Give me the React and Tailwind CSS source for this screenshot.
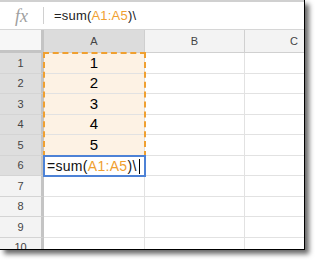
import React from 'react';

const rows = [
    { n: 1, h: 'h-[21px]', v: '1' },
    { n: 2, h: 'h-[20px]', v: '2' },
    { n: 3, h: 'h-[21px]', v: '3' },
    { n: 4, h: 'h-[20px]', v: '4' },
    { n: 5, h: 'h-[21px]', v: '5' },
    { n: 6, h: 'h-[20px]', v: '' },
    { n: 7, h: 'h-[21px]', v: '' },
    { n: 8, h: 'h-[20px]', v: '' },
    { n: 9, h: 'h-[21px]', v: '' },
    { n: 10, h: 'h-[20px]', v: '' },
];

const Formula = () => (
    <>
        =sum(<span className="text-[#f0a030]">A1:A5</span>)\
    </>
);

export default function App() {
    return (
        <div className="w-[315px] h-[260px] bg-white overflow-hidden font-['Liberation_Sans',Arial,sans-serif]">
            <div className="relative w-[305px] h-[250px] bg-white border-r border-b border-black shadow-[4px_4px_5px_rgba(0,0,0,0.6)] overflow-hidden flex flex-col">
                <div className="h-[2px] bg-[#d0d0d0] shrink-0" />

                {/* formula bar */}
                <div className="h-[28px] shrink-0 flex items-center border-b border-[#d6d6d6]">
                    <div className="w-[43px] flex justify-center">
                        <span className="font-['Liberation_Serif',serif] italic text-[18px] text-[#a0a0a0] leading-none">fx</span>
                    </div>
                    <div className="w-px h-[17px] bg-[#d0d0d0]" />
                    <div className="pl-[10px] text-[13px] text-[#222] leading-none tracking-[0.2px]">
                        <Formula />
                    </div>
                </div>

                {/* column headers */}
                <div className="h-[23px] shrink-0 flex">
                    <div className="w-[44px] bg-[#f7f7f7] border-r-[3px] border-b-[3px] border-[#c4c4c4]" />
                    <div className="w-[101px] bg-[#dcdcdc] border-r border-b border-[#cfcfcf] flex items-center justify-center text-[11px] text-[#444]">A</div>
                    <div className="w-[100px] bg-[#f3f3f3] border-r border-b border-[#d0d0d0] flex items-center justify-center text-[11px] text-[#444]">B</div>
                    <div className="flex-1 bg-[#f3f3f3] border-b border-[#d0d0d0] flex items-center justify-end pr-[6px] text-[11px] text-[#444]">C</div>
                </div>

                {/* rows */}
                <div className="relative flex flex-col">
                    {rows.map(r => (
                        <div key={r.n} className={`${r.h} shrink-0 flex`}>
                            <div className={`w-[44px] border-r-[3px] border-r-[#c4c4c4] border-b border-b-[#d4d4d4] flex items-center justify-center text-[11px] text-[#444] ${r.n <= 6 ? 'bg-[#dedede]' : 'bg-[#f3f3f3]'}`}>
                                {r.n}
                            </div>
                            <div className={`w-[101px] border-r border-b border-[#e2e2e2] flex items-center justify-center text-[15px] text-black ${r.n <= 5 ? 'bg-[#fdf2e4]' : ''}`}>
                                {r.v}
                            </div>
                            <div className="w-[100px] border-r border-b border-[#e2e2e2]" />
                            <div className="flex-1 border-b border-[#e2e2e2]" />
                        </div>
                    ))}

                    {/* copy range A1:A5 */}
                    <div className="absolute left-[43px] top-[-1px] w-[103px] h-[105px] border-2 border-dashed border-[#f0a030] pointer-events-none" />

                    {/* active cell A6 */}
                    <div className="absolute left-[43px] top-[102px] w-[103px] h-[22px] border-2 border-[#4d82d6] bg-white flex items-center pl-[2px] text-[14px] text-[#111] leading-none tracking-[0.3px]">
                        <Formula />
                        <span className="ml-[2px] w-px h-[15px] bg-black" />
                    </div>
                </div>
            </div>
        </div>
    );
}
